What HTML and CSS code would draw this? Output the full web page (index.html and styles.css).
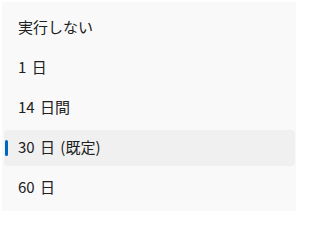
FILE: index.html
```html
<!DOCTYPE html>
<html lang="ja">
<head>
<meta charset="utf-8">
<link rel="stylesheet" href="styles.css">
</head>
<body>
<div class="menu">
  <div class="item">実行しない</div>
  <div class="item">1 日</div>
  <div class="item">14 日間</div>
  <div class="item selected"><span class="bar"></span>30 日 (既定)</div>
  <div class="item">60 日</div>
</div>
</body>
</html>
```
FILE: styles.css
```css
html, body {
  margin: 0;
  padding: 0;
  background: #ffffff;
}
.menu {
  margin: 2px 0 0 2px;
  width: 294px;
  height: 209px;
  background: #f9f9f9;
  padding: 8px 1px 0 2px;
  box-sizing: border-box;
  display: flex;
  flex-direction: column;
  gap: 4px;
  font-family: "Noto Sans CJK JP", "Noto Sans", sans-serif;
  font-size: 15px;
  color: #202020;
  word-spacing: 2px;
}
.item {
  height: 36px;
  display: flex;
  align-items: center;
  padding: 0 0 3px 14px;
  box-sizing: border-box;
  border-radius: 4px;
  position: relative;
}
.item.selected {
  background: #f0f0f0;
}
.bar {
  position: absolute;
  left: 1px;
  top: 10px;
  width: 3px;
  height: 16px;
  border-radius: 2px;
  background: #0067c0;
}
```
